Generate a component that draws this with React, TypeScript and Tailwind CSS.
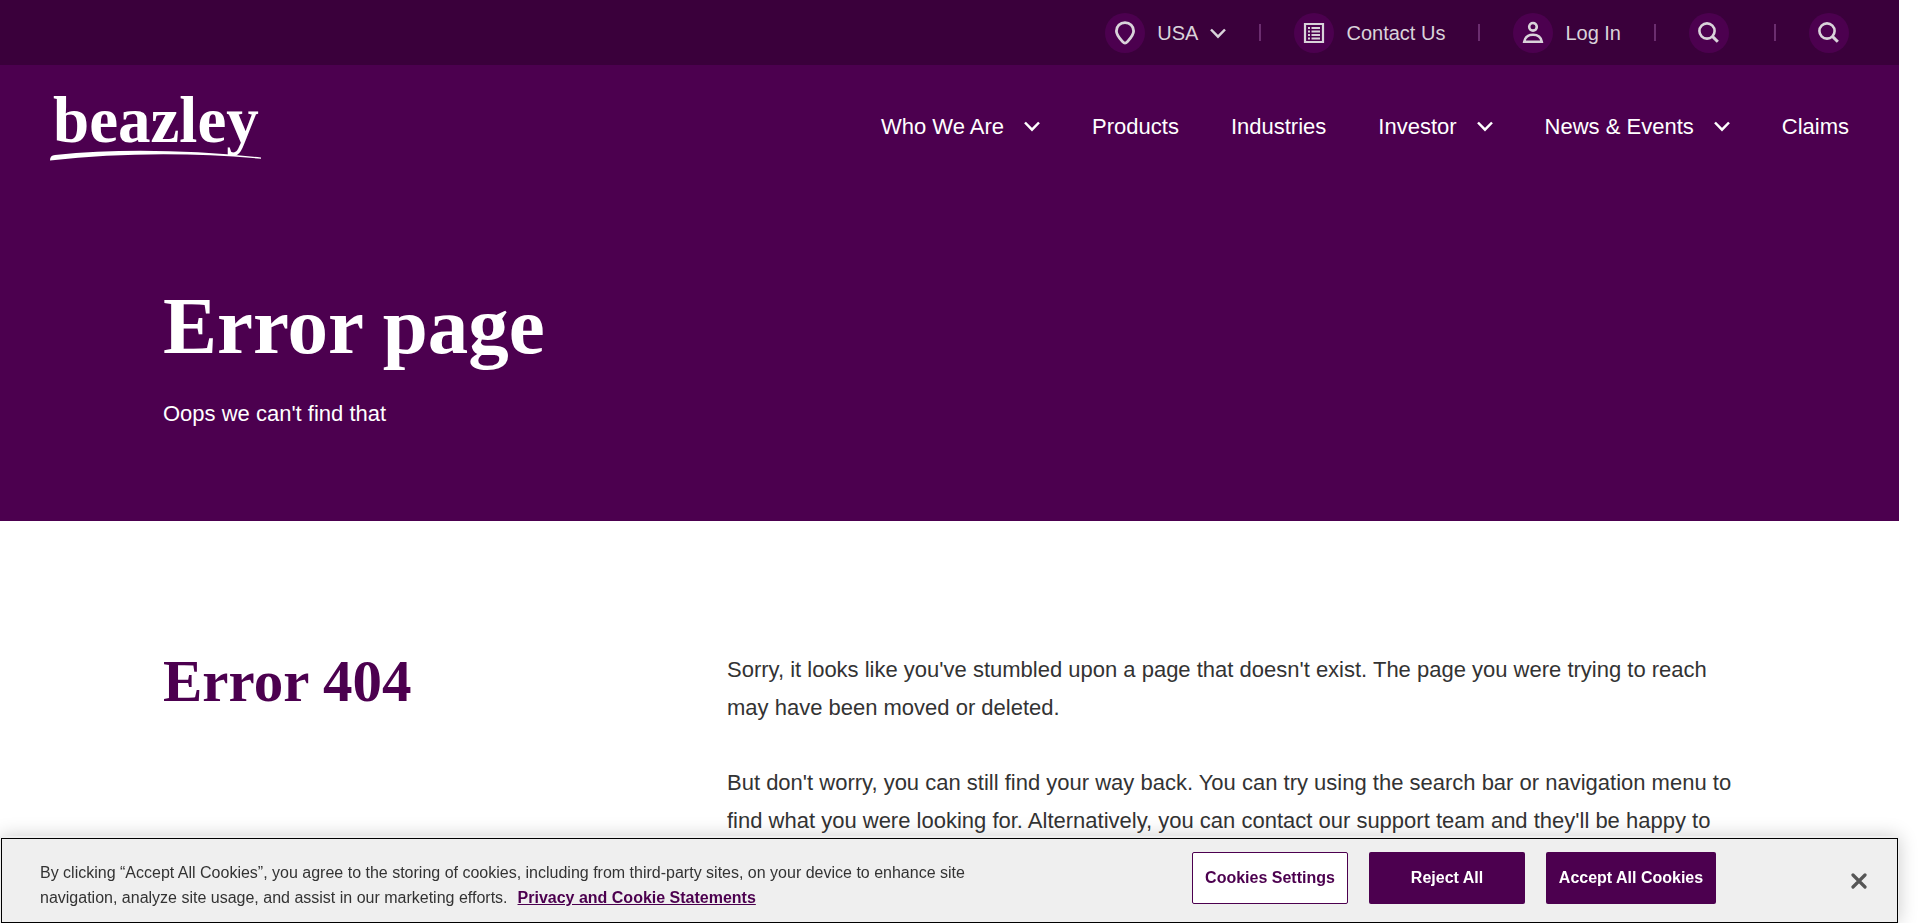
import React from "react";

const sans = "font-['Liberation_Sans',Arial,sans-serif]";
const serif = "font-['Liberation_Serif','Times_New_Roman',serif]";

function Chevron() {
  return (
    <svg className="h-4 w-4 shrink-0" viewBox="0 0 16 16" fill="none" stroke="currentColor" strokeWidth="2.5" aria-hidden="true">
      <path d="M1 4.500l7 7.200 7-7.200" />
    </svg>
  );
}

function Round({ children }: { children: React.ReactNode }) {
  return (
    <span className="flex h-10 w-10 shrink-0 items-center justify-center rounded-full bg-[#4c004f]">
      <svg className="h-6 w-6" viewBox="0 0 24 24" fill="none" stroke="currentColor" strokeWidth="2.8" aria-hidden="true">
        {children}
      </svg>
    </span>
  );
}

function PinIcon() {
  return (
    <Round>
      <path d="M12 1.600c4.900 0 8.600 3.500 8.600 8.400 0 4.100-3.200 7.200-6.400 10.900-1.500 1.700-2.900 1.700-4.400 0C6.600 17.200 3.400 14.100 3.400 10 3.400 5.100 7.100 1.600 12 1.600z" />
    </Round>
  );
}

function ListIcon() {
  return (
    <Round>
      <path d="M3 3h18v18H3z" strokeWidth="2.200" />
      <path d="M6 7h2M6 10.500h2M6 14h2M6 17.500h2M9.500 7H18M9.500 10.500H18M9.500 14H18M9.500 17.500H18" strokeWidth="2" />
    </Round>
  );
}

function UserIcon() {
  return (
    <Round>
      <circle cx="12" cy="5.800" r="3.800" strokeWidth="2.600" />
      <path d="M3.200 20.800h17.600c-.8-4.400-4-7-8.800-7s-8 2.600-8.800 7z" strokeWidth="2.500" />
    </Round>
  );
}

function SearchIcon() {
  return (
    <Round>
      <circle cx="10" cy="10" r="7.600" strokeWidth="2.600" />
      <path d="M15.400 15.400l5.400 5.400" strokeWidth="3" />
    </Round>
  );
}

function Separator() {
  return <span className="mx-[33px] h-[17px] w-[2px] bg-[#6b2d6f]" />;
}

function NavItem({ label, menu = false }: { label: string; menu?: boolean }) {
  return (
    <li className="flex items-center gap-5">
      <a href="#">{label}</a>
      {menu && (
        <button type="button" aria-label={`${label} menu`}>
          <Chevron />
        </button>
      )}
    </li>
  );
}

export default function App() {
  return (
    <div className={`h-screen overflow-hidden bg-white pr-[21px] text-[#333] ${sans}`}>
      <header className="bg-[#4c004f] text-white">
        <div className="flex h-[65px] items-center justify-end bg-[#3a003b] pr-[50px] text-xl text-[#d9d3da]">
          <button type="button" className="flex items-center gap-3">
            <PinIcon />
            USA
            <Chevron />
          </button>
          <Separator />
          <a href="#" className="flex items-center gap-3">
            <ListIcon />
            Contact Us
          </a>
          <Separator />
          <a href="#" className="flex items-center gap-3">
            <UserIcon />
            Log In
          </a>
          <Separator />
          <button type="button" aria-label="Search" className="mr-3">
            <SearchIcon />
          </button>
          <Separator />
          <button type="button" aria-label="Open search">
            <SearchIcon />
          </button>
        </div>
        <div className="flex h-[122px] items-center justify-between px-[50px]">
          <a href="#" aria-label="beazley" className="block">
            <svg className="h-[84px] w-[212px]" viewBox="0 0 212 84" fill="white">
              <text x="3" y="58" fontSize="65" fontWeight="700" className={serif}>beazley</text>
              <path d="M0 76.500c0-3.500 1.500-5.300 5-5.600C70 64.500 140 66 211 73.500v1.300C145 68.500 70 68.500 0 76.500z" />
            </svg>
          </a>
          <nav>
            <ul className="flex items-center gap-[52px] text-[22px]">
              <NavItem label="Who We Are" menu />
              <NavItem label="Products" />
              <NavItem label="Industries" />
              <NavItem label="Investor" menu />
              <NavItem label="News & Events" menu />
              <NavItem label="Claims" />
            </ul>
          </nav>
        </div>
      </header>
      <section className="h-[334px] bg-[#4c004f] pt-[91px] pl-[163px] text-white">
        <h1 className={`text-[81px] leading-[96px] font-bold ${serif}`}>Error page</h1>
        <p className="mt-[21px] text-[22px] leading-[38px]">Oops we can't find that</p>
      </section>
      <main className="flex pt-[130px] pr-[150px] pl-[163px]">
        <h2 className={`w-[564px] shrink-0 text-[59px] leading-[60px] font-bold text-[#4c004f] ${serif}`}>Error 404</h2>
        <div className="flex flex-1 flex-col gap-[37px] text-[22px] leading-[38px]">
          <p>Sorry, it looks like you've stumbled upon a page that doesn't exist. The page you were trying to reach may have been moved or deleted.</p>
          <p>But don't worry, you can still find your way back. You can try using the search bar or navigation menu to find what you were looking for. Alternatively, you can contact our support team and they'll be happy to</p>
        </div>
      </main>
      <aside
        aria-label="Cookie consent"
        className="fixed right-[21px] bottom-0 left-0 bg-[#efefef] px-px pt-[2px] shadow-[0_0_18px_rgba(0,0,0,0.2)]"
      >
        <div className="flex h-[85px] items-start border border-black pr-[30px] pl-[38px]">
          <p className="w-[950px] pt-[21px] text-base leading-[25px]">
            By clicking “Accept All Cookies”, you agree to the storing of cookies, including from third-party sites, on your device to enhance site navigation, analyze site usage, and assist in our marketing efforts.
            <a href="#" className="ml-[10px] font-bold text-[#4c004f] underline">Privacy and Cookie Statements</a>
          </p>
          <div className="mt-[13px] ml-auto flex gap-[21px] text-base font-bold">
            <button type="button" className="h-[52px] w-[156px] rounded-[2px] border border-[#4c004f] bg-white text-[#4c004f]">Cookies Settings</button>
            <button type="button" className="h-[52px] w-[156px] rounded-[2px] bg-[#4c004f] text-white">Reject All</button>
            <button type="button" className="h-[52px] w-[170px] rounded-[2px] bg-[#4c004f] text-white">Accept All Cookies</button>
          </div>
          <button type="button" aria-label="Close" className="mt-[34px] ml-[135px] text-[#565656]">
            <svg className="h-4 w-4" viewBox="0 0 16 16" fill="none" stroke="currentColor" strokeWidth="3.200" strokeLinecap="round">
              <path d="M2 2l12 12M14 2L2 14" />
            </svg>
          </button>
        </div>
      </aside>
    </div>
  );
}
